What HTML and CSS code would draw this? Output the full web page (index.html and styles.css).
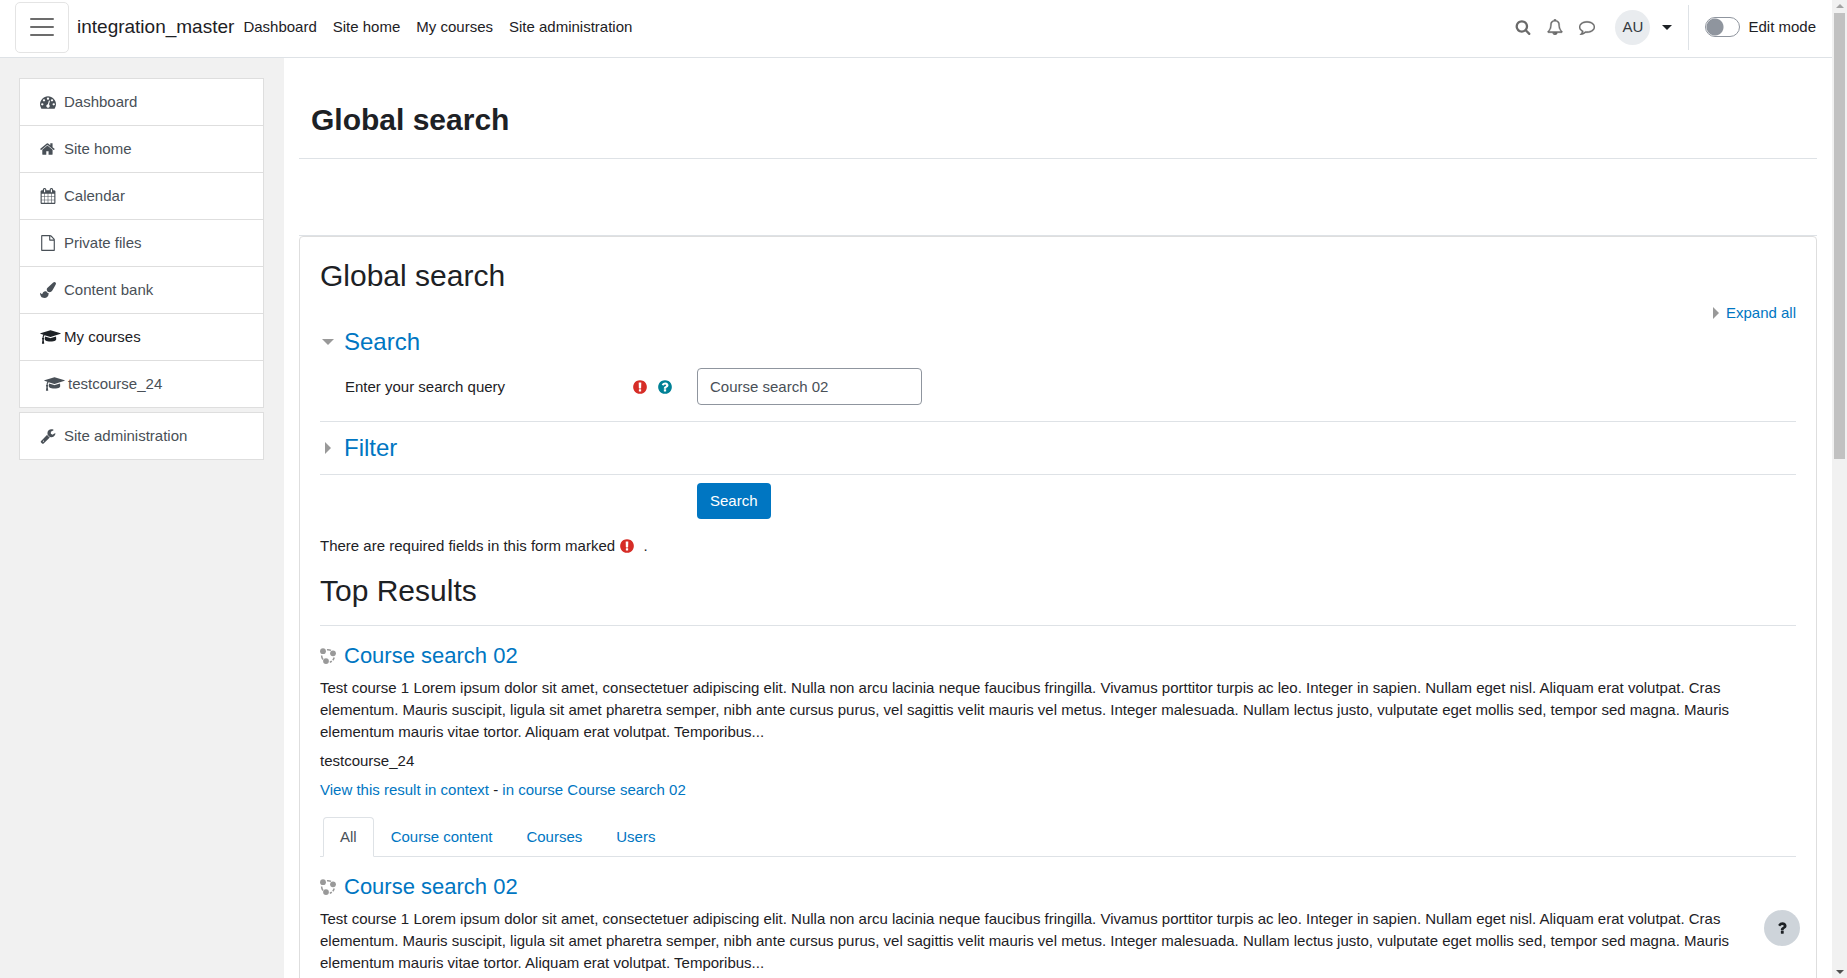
FILE: index.html
```html
<!DOCTYPE html>
<html lang="en">
<head>
<meta charset="utf-8">
<title>Global search</title>
<link rel="stylesheet" href="styles.css">
</head>
<body>
<svg class="sprite" aria-hidden="true">
  <symbol id="i-tachometer" viewBox="0 0 1792 1792"><path d="M384 1152q0-53-37.500-90.500t-90.500-37.500-90.500 37.500-37.500 90.500 37.500 90.500 90.500 37.500 90.500-37.500 37.500-90.500zm192-448q0-53-37.500-90.500t-90.500-37.500-90.500 37.500-37.500 90.500 37.500 90.500 90.500 37.500 90.500-37.500 37.500-90.500zm428 481l101-382q6-26-7.500-48.500t-38.500-29.500-48 6.500-30 39.500l-101 382q-60 5-107 43.500t-63 98.500q-20 77 20 146t117 89 146-20 89-117q16-60-6-117t-72-91zm660-33q0-53-37.500-90.500t-90.500-37.500-90.500 37.500-37.500 90.500 37.500 90.500 90.500 37.500 90.500-37.500 37.500-90.500zm-640-640q0-53-37.500-90.500t-90.500-37.500-90.500 37.500-37.500 90.500 37.500 90.500 90.500 37.500 90.500-37.500 37.500-90.500zm448 192q0-53-37.500-90.500t-90.500-37.500-90.500 37.500-37.500 90.500 37.500 90.500 90.500 37.500 90.500-37.500 37.500-90.500zm320 448q0 261-141 483-19 29-54 29h-1402q-35 0-54-29-141-221-141-483 0-182 71-348t191-286 286-191 348-71 348 71 286 191 191 286 71 348z"/></symbol>
  <symbol id="i-home" viewBox="0 0 1792 1792"><path transform="translate(-64 0)" d="M1472 992v480q0 26-19 45t-45 19h-384v-384h-256v384h-384q-26 0-45-19t-19-45v-480q0-1 .5-3t.5-3l575-474 575 474q1 2 1 6zm223-69l-62 74q-8 9-21 11h-3q-13 0-21-7l-692-577-692 577q-12 8-24 7-13-2-21-11l-62-74q-8-10-7-23.500t11-21.500l719-599q32-26 76-26t76 26l244 204v-195q0-14 9-23t23-9h192q14 0 23 9t9 23v408l219 182q10 8 11 21.500t-7 23.500z"/></symbol>
  <symbol id="i-calendar" viewBox="0 0 1792 1792"><path d="M192 1664h288v-288h-288v288zm352 0h320v-288h-320v288zm-352-352h288v-320h-288v320zm352 0h320v-320h-320v320zm-352-384h288v-288h-288v288zm736 736h320v-288h-320v288zm-384-736h320v-288h-320v288zm768 736h288v-288h-288v288zm-384-352h320v-320h-320v320zm-352-864v-288q0-13-9.500-22.500t-22.500-9.500h-64q-13 0-22.500 9.500t-9.500 22.500v288q0 13 9.500 22.500t22.500 9.500h64q13 0 22.500-9.500t9.500-22.500zm736 864h288v-320h-288v320zm-384-384h320v-288h-320v288zm384 0h288v-288h-288v288zm32-480v-288q0-13-9.500-22.500t-22.500-9.500h-64q-13 0-22.500 9.500t-9.500 22.500v288q0 13 9.500 22.500t22.500 9.500h64q13 0 22.500-9.500t9.500-22.500zm384-64v1280q0 52-38 90t-90 38h-1408q-52 0-90-38t-38-90v-1280q0-52 38-90t90-38h128v-96q0-66 47-113t113-47h64q66 0 113 47t47 113v96h384v-96q0-66 47-113t113-47h64q66 0 113 47t47 113v96h128q52 0 90 38t38 90z"/></symbol>
  <symbol id="i-file" viewBox="0 0 1792 1792"><path d="M1596 380q28 28 48 76t20 88v1152q0 40-28 68t-68 28h-1344q-40 0-68-28t-28-68v-1600q0-40 28-68t68-28h896q40 0 88 20t76 48zm-444-244v376h376q-10-29-22-41l-313-313q-12-12-41-22zm384 1528v-1024h-416q-40 0-68-28t-28-68v-416h-768v1536h1280z"/></symbol>
  <symbol id="i-brush" viewBox="0 0 1792 1792"><path d="M1615 0q70 0 122.500 46.500t52.500 116.500q0 63-45 151-332 629-465 752-97 91-218 91-126 0-216.500-92.500t-90.500-219.500q0-128 92-212l638-579q59-54 130-54zm-909 1034q39 76 106.500 130t150.500 76l1 71q4 213-129.500 347t-348.500 134q-123 0-218-46.500t-152.500-127.500-86.500-183-29-220q7 5 41 30t62 44.500 59 36.500 46 17q41 0 55-37 25-66 57.500-112.500t69.500-76 88-47.500 103-25.500 125-10.500z"/></symbol>
  <symbol id="i-cap" viewBox="0 0 2304 1792"><path d="M1774 836l18 316q4 69-82 128t-235 93.500-323 34.500-323-34.500-235-93.500-82-128l18-316 574 181q22 7 48 7t48-7zm530-324q0 23-22 31l-1120 352q-4 1-10 1t-10-1l-652-206q-43 34-71 111.500t-34 178.500q63 36 63 109 0 69-58 107l58 433q2 14-8 25-9 11-24 11h-192q-15 0-24-11-10-11-8-25l58-433q-58-38-58-107 0-73 65-111 11-207 98-330l-333-104q-22-8-22-31t22-31l1120-352q4-1 10-1t10 1l1120 352q22 8 22 31z"/></symbol>
  <symbol id="i-wrench" viewBox="0 0 1792 1792"><path d="M448 1472q0-26-19-45t-45-19-45 19-19 45 19 45 45 19 45-19 19-45zm644-420l-682 682q-37 37-90 37-52 0-91-37l-106-108q-38-36-38-90 0-53 38-91l681-681q39 98 114.500 173.500t173.500 114.500zm634-435q0 39-23 106-47 134-164.500 217.500t-258.500 83.500q-185 0-316.500-131.500t-131.500-316.500 131.500-316.500 316.500-131.500q58 0 121.500 16.500t107.500 46.500q16 11 16 28t-16 28l-293 169v224l193 107q5-3 79-48.500t135.500-81 70.500-35.500q15 0 23.500 10t8.500 25z"/></symbol>
  <symbol id="i-search" viewBox="0 0 1792 1792"><path d="M1216 832q0-185-131.500-316.500t-316.500-131.500-316.500 131.500-131.500 316.500 131.500 316.500 316.500 131.500 316.500-131.500 131.500-316.500zm512 832q0 52-38 90t-90 38q-54 0-90-38l-343-342q-179 124-399 124-143 0-273.500-55.500t-225-150-150-225-55.500-273.500 55.500-273.500 150-225 225-150 273.500-55.500 273.500 55.500 225 150 150 225 55.500 273.500q0 220-124 399l343 343q37 37 37 90z"/></symbol>
  <symbol id="i-bell" viewBox="0 0 1792 1792"><path stroke="currentColor" stroke-width="50" d="M912 1696q0-16-16-16-59 0-101.500-42.500t-42.500-101.500q0-16-16-16t-16 16q0 73 51.500 124.500t124.500 51.500q16 0 16-16zm-666-288h1300q-266-300-266-832 0-51-24-105t-69-103-121.500-80.500-169.500-31.500-169.500 31.500-121.500 80.500-69 103-24 105q0 532-266 832zm1482 0q0 52-38 90t-90 38h-448q0 106-75 181t-181 75-181-75-75-181h-448q-52 0-90-38t-38-90q50-42 91-88t85-119.500 74.500-158.500 50-206 19.500-260q0-152 117-282.500t307-158.500q-8-19-8-39 0-40 28-68t68-28 68 28 28 68q0 20-8 39 190 28 307 158.500t117 282.500q0 139 19.500 260t50 206 74.500 158.500 85 119.500 91 88z"/></symbol>
  <symbol id="i-comment" viewBox="0 0 1792 1792"><path stroke="currentColor" stroke-width="50" d="M896 384q-204 0-381.500 69.500t-282 187.500-104.500 255q0 112 71.500 213.500t201.500 175.500l87 50-27 96q-24 91-70 172 152-63 275-171l43-38 57 6q69 8 130 8 204 0 381.500-69.500t282-187.500 104.500-255-104.500-255-282-187.500-381.500-69.500zm896 512q0 174-120 321.500t-326 233-450 85.500q-70 0-145-8-198 175-460 242-49 14-114 22h-5q-15 0-27-10.500t-16-27.500v-1q-3-4-.5-12t2-10 4.500-9.500l6-9 7-8.500 8-9q7-8 31-34.500t34.500-38 31-39.500 32.500-51 27-59 26-76q-157-89-247.500-220t-90.500-281q0-174 120-321.500t326-233 450-85.500 450 85.500 326 233 120 321.500z"/></symbol>
  <symbol id="i-required" viewBox="0 0 1792 1792"><path d="M896 128q209 0 385.500 103t279.500 279.500 103 385.500-103 385.500-279.500 279.500-385.500 103-385.500-103-279.500-279.500-103-385.500 103-385.500 279.500-279.500 385.500-103zm128 1247v-190q0-14-9-23.500t-22-9.500h-192q-13 0-23 10t-10 23v190q0 13 10 23t23 10h192q13 0 22-9.500t9-23.500zm-2-344l18-621q0-12-10-18-10-8-24-8h-220q-14 0-24 8-10 6-10 18l17 621q0 10 10 17.500t24 7.500h185q14 0 23.500-7.500t10.500-17.500z"/></symbol>
  <symbol id="i-help" viewBox="0 0 1792 1792"><path d="M1024 1376v-192q0-14-9-23t-23-9h-192q-14 0-23 9t-9 23v192q0 14 9 23t23 9h192q14 0 23-9t9-23zm256-672q0-88-55.500-163t-138.500-116-170-41q-243 0-371 213-15 24 8 42l132 100q7 6 19 6 16 0 25-12 53-68 86-92 34-24 86-24 48 0 85.500 26t37.500 59q0 38-20 61t-68 45q-63 28-115.500 86.500t-52.500 125.500v36q0 14 9 23t23 9h192q14 0 23-9t9-23q0-19 21.500-49.500t54.500-49.500q32-18 49-28.500t46-35 44.500-48 28-60.500 12.500-81zm384 192q0 209-103 385.500t-279.500 279.500-385.500 103-385.500-103-279.500-279.500-103-385.500 103-385.500 279.500-279.500 385.500-103 385.500 103 279.500 279.500 103 385.500z"/></symbol>
  <symbol id="i-question" viewBox="0 0 1792 1792"><path d="M1088 1256v240q0 16-12 28t-28 12h-240q-16 0-28-12t-12-28v-240q0-16 12-28t28-12h240q16 0 28 12t12 28zm316-600q0 54-15.500 101t-35 76.500-55 59.500-57.500 43.500-61 35.500q-41 23-68.500 65t-27.500 67q0 17-12 32.500t-28 15.500h-240q-15 0-25.500-18.500t-10.500-37.500v-45q0-83 65-156.500t143-108.500q59-27 84-56t25-76q0-42-46.500-74t-107.500-32q-65 0-108 29-35 25-107 115-13 16-31 16-12 0-25-8l-164-125q-13-10-15.500-25t5.500-28q160-266 464-266 80 0 161 31t146 83 106 127.500 41 158.500z"/></symbol>
  <symbol id="i-course" viewBox="0 0 16 16"><circle cx="3" cy="3.200" r="2.900"/><circle cx="13" cy="5.300" r="2.900"/><circle cx="6" cy="13.100" r="2.900"/><path fill="none" stroke="currentColor" stroke-width="1.500" d="M7 1.700A6.500 6.500 0 0 1 11 2.400M1.600 7.500A6.500 6.500 0 0 0 3 11.500M14.200 9.500A6.500 6.500 0 0 1 12.800 12.200M11.800 13.200A6.500 6.500 0 0 1 9.800 14.200"/></symbol>
</svg>

<div class="viewport">
<div class="page">
  <header class="navbar">
    <button class="drawer-toggle" aria-label="Side panel"><svg class="bars" viewBox="0 0 30 30"><path d="M4 7h22M4 15h22M4 23h22"/></svg></button>
    <a class="brand" href="#">integration_master</a>
    <nav class="primary-nav">
      <a href="#">Dashboard</a><a href="#">Site home</a><a href="#">My courses</a><a href="#">Site administration</a>
    </nav>
    <div class="tools">
      <button class="tool" aria-label="Search"><svg class="icon"><use href="#i-search"/></svg></button>
      <button class="tool" aria-label="Notifications"><svg class="icon"><use href="#i-bell"/></svg></button>
      <button class="tool" aria-label="Messages"><svg class="icon"><use href="#i-comment"/></svg></button>
    </div>
    <button class="user-menu" aria-label="User menu"><span class="avatar">AU</span><span class="caret"></span></button>
    <label class="edit-mode"><input class="switch" type="checkbox" role="switch">Edit mode</label>
  </header>

  <div class="columns">
    <aside class="drawer">
      <nav class="nav-list">
        <a href="#"><svg class="icon"><use href="#i-tachometer"/></svg>Dashboard</a>
        <a href="#"><svg class="icon"><use href="#i-home"/></svg>Site home</a>
        <a href="#"><svg class="icon"><use href="#i-calendar"/></svg>Calendar</a>
        <a href="#"><svg class="icon"><use href="#i-file"/></svg>Private files</a>
        <a href="#"><svg class="icon"><use href="#i-brush"/></svg>Content bank</a>
        <a class="current" href="#"><svg class="icon wide"><use href="#i-cap"/></svg>My courses</a>
        <a class="nested" href="#"><svg class="icon wide"><use href="#i-cap"/></svg>testcourse_24</a>
      </nav>
      <nav class="nav-list">
        <a href="#"><svg class="icon"><use href="#i-wrench"/></svg>Site administration</a>
      </nav>
    </aside>

    <main class="content">
      <div class="page-header"><h1>Global search</h1></div>
      <div class="card-rule"></div>
      <section class="card">
        <h2 class="card-title">Global search</h2>
        <form>
          <div class="expand-row"><a href="#"><span class="arrow right"></span>Expand all</a></div>
          <fieldset class="group first">
            <h3 class="group-title"><span class="marker"><span class="arrow down"></span></span><a href="#">Search</a></h3>
            <div class="field">
              <label for="query">Enter your search query</label>
              <span class="field-icons"><svg class="icon danger"><use href="#i-required"/></svg><svg class="icon info"><use href="#i-help"/></svg></span>
              <input id="query" type="text" value="Course search 02">
            </div>
          </fieldset>
          <fieldset class="group">
            <h3 class="group-title"><span class="marker"><span class="arrow right"></span></span><a href="#">Filter</a></h3>
          </fieldset>
          <div class="actions"><button class="primary" type="button">Search</button></div>
          <p class="required-note">There are required fields in this form marked <svg class="icon danger"><use href="#i-required"/></svg> .</p>
        </form>

        <h2 class="results-title">Top Results</h2>
        <article class="result top">
          <h3><svg class="icon"><use href="#i-course"/></svg><a href="#">Course search 02</a></h3>
          <p>Test course 1 Lorem ipsum dolor sit amet, consectetuer adipiscing elit. Nulla non arcu lacinia neque faucibus fringilla. Vivamus porttitor turpis ac leo. Integer in sapien. Nullam eget nisl. Aliquam erat volutpat. Cras elementum. Mauris suscipit, ligula sit amet pharetra semper, nibh ante cursus purus, vel sagittis velit mauris vel metus. Integer malesuada. Nullam lectus justo, vulputate eget mollis sed, tempor sed magna. Mauris elementum mauris vitae tortor. Aliquam erat volutpat. Temporibus...</p>
          <p>testcourse_24</p>
          <p><a href="#">View this result in context</a> - <a href="#">in course Course search 02</a></p>
        </article>
        <nav class="tabs">
          <a class="active" href="#">All</a><a href="#">Course content</a><a href="#">Courses</a><a href="#">Users</a>
        </nav>
        <article class="result">
          <h3><svg class="icon"><use href="#i-course"/></svg><a href="#">Course search 02</a></h3>
          <p>Test course 1 Lorem ipsum dolor sit amet, consectetuer adipiscing elit. Nulla non arcu lacinia neque faucibus fringilla. Vivamus porttitor turpis ac leo. Integer in sapien. Nullam eget nisl. Aliquam erat volutpat. Cras elementum. Mauris suscipit, ligula sit amet pharetra semper, nibh ante cursus purus, vel sagittis velit mauris vel metus. Integer malesuada. Nullam lectus justo, vulputate eget mollis sed, tempor sed magna. Mauris elementum mauris vitae tortor. Aliquam erat volutpat. Temporibus...</p>
        </article>
      </section>
    </main>
  </div>
  <button class="help-button" aria-label="Help"><svg class="icon"><use href="#i-question"/></svg></button>
</div>
<div class="scrollbar" aria-hidden="true"><span class="scroll-arrow up"></span><span class="thumb"></span><span class="scroll-arrow down"></span></div>
</div>
</body>
</html>
```

FILE: styles.css
```css
* { box-sizing: border-box; }

body {
  margin: 0;
  background: #fff;
  color: #1d2125;
  font: 15px/22px "Liberation Sans", Arial, sans-serif;
}

a { color: #0076c2; text-decoration: none; }
button { font: inherit; color: inherit; background: none; border: 0; padding: 0; }
h1, h2, h3, p { margin: 0; }

.sprite { display: none; }
.icon { width: 16px; height: 16px; flex: none; fill: currentColor; }
.icon.wide { width: 21px; }
.icon.danger { color: #d62d27; }
.icon.info { color: #008196; }

.viewport { display: flex; height: 100vh; overflow: hidden; }
.page { position: relative; flex: 1; min-width: 0; display: flex; flex-direction: column; overflow: hidden; }

/* top bar */
.navbar {
  display: flex;
  align-items: center;
  flex: none;
  height: 58px;
  padding: 0 16px 3px 15px;
  border-bottom: 1px solid #dee2e6;
}
.drawer-toggle {
  display: grid;
  place-items: center;
  width: 54px;
  height: 51px;
  border: 1px solid #e4e4e4;
  border-radius: 5px;
}
.bars { width: 30px; height: 30px; fill: none; stroke: #6c6c6c; stroke-width: 2; stroke-linecap: round; }
.brand { margin: 0 9px 0 8px; color: #1d2125; font-size: 19px; }
.primary-nav { display: flex; gap: 16px; }
.primary-nav a { color: #1d2125; }
.tools { display: flex; gap: 16px; margin-left: auto; color: #6a6a6a; }
.tool { display: flex; }
.user-menu { display: flex; align-items: center; gap: 12px; margin: 0 16px 0 20px; }
.avatar {
  display: grid;
  place-items: center;
  width: 35px;
  height: 35px;
  border-radius: 50%;
  background: #e9ecef;
  color: #343a40;
}
.caret { border: 5px solid transparent; border-top-color: #1d2125; border-bottom: 0; }
.edit-mode {
  display: flex;
  align-items: center;
  gap: 8px;
  height: 45px;
  padding-left: 16px;
  border-left: 1px solid #dee2e6;
}
.switch {
  appearance: none;
  width: 35px;
  height: 20px;
  margin: 0;
  border: 1px solid #8f959e;
  border-radius: 10px;
  background: radial-gradient(circle at 9px 9px, #8f959e 8px, transparent 9px);
}

/* side drawer */
.columns { display: flex; flex: 1; min-height: 0; }
.drawer {
  display: flex;
  flex-direction: column;
  gap: 4px;
  flex: none;
  width: 284px;
  padding: 20px 20px 0 19px;
  background: #f1f1f1;
}
.nav-list { border: 1px solid #dedede; background: #fff; }
.nav-list a {
  display: flex;
  align-items: center;
  gap: 8px;
  height: 46px;
  padding-left: 20px;
  color: #495057;
}
.nav-list a + a { height: 47px; border-top: 1px solid #dedede; }
.nav-list .icon.wide { margin-right: -5px; }
.nav-list a.current { color: #1d2125; }
.nav-list a.nested { padding-left: 24px; }

/* main column */
.content { flex: 1; min-width: 0; padding: 0 15px; }
.page-header { padding: 44px 12px 20px; border-bottom: 1px solid #dee2e6; }
h1 { font-size: 30px; line-height: 36px; }
.card-rule { margin-top: 76px; border-top: 1px solid #dee2e6; }
.card { padding: 21px 20px 20px; border: 1px solid #dedede; border-radius: 4px; min-height: 100%; }
h2 { font-weight: 400; font-size: 30px; line-height: 36px; }
h3 { font-weight: 400; }
.expand-row { display: flex; justify-content: flex-end; padding-top: 8px; }
.expand-row a { display: flex; align-items: center; gap: 7px; }
.arrow { width: 0; height: 0; border: 6px solid transparent; }
.arrow.right { border-left-color: #999; border-right: 0; }
.arrow.down { border-top-color: #999; border-bottom: 0; }
.group { margin: 0; padding: 12px 0; border: 0; border-bottom: 1px solid #dee2e6; }
.group.first { padding: 4px 0 16px; }
.group-title { display: flex; align-items: center; font-size: 24px; line-height: 28px; }
.marker { display: flex; justify-content: center; width: 16px; margin-right: 8px; }
.field { display: flex; align-items: center; margin-top: 12px; padding-left: 25px; }
.field label { width: 287px; }
.field-icons { display: flex; gap: 9px; width: 65px; }
.field input {
  width: 225px;
  height: 37px;
  padding: 0 12px;
  border: 1px solid #8f959e;
  border-radius: 4px;
  color: #495057;
  font: inherit;
}
.actions { padding: 8px 0 0 377px; }
.primary { height: 36px; padding: 0 13px; border-radius: 4px; background: #0076c2; color: #fff; }
.required-note { margin-top: 16px; }
.required-note .icon { vertical-align: -3px; margin-right: 4px; }
.results-title { margin-top: 16px; }

/* results */
.result.top { margin-top: 16px; border-top: 1px solid #dee2e6; }
.result { padding-top: 16px; }
.result h3 { display: flex; align-items: center; gap: 8px; font-size: 22px; line-height: 28px; }
.result h3 .icon { color: #999; }
.result p { margin-top: 7px; }
.tabs { display: flex; margin-top: 16px; padding-left: 3px; border-bottom: 1px solid #dee2e6; }
.tabs a { padding: 8px 16px; border: 1px solid transparent; border-radius: 4px 4px 0 0; margin-bottom: -1px; }
.tabs a.active { border-color: #dee2e6 #dee2e6 #fff; background: #fff; color: #495057; }

.help-button {
  position: absolute;
  right: 32px;
  bottom: 32px;
  display: grid;
  place-items: center;
  width: 36px;
  height: 36px;
  border-radius: 50%;
  background: #ced4da;
}

/* scroll rail */
.scrollbar {
  display: flex;
  flex-direction: column;
  align-items: center;
  flex: none;
  width: 15px;
  padding: 4px 0;
  background: #f1f1f1;
}
.scroll-arrow { border: 4px solid transparent; }
.scroll-arrow.up { border-top: 0; border-bottom-color: #a3a3a3; }
.scroll-arrow.down { margin-top: auto; border-bottom: 0; border-top-color: #505050; }
.thumb { width: 11px; height: 46%; margin-top: 5px; background: #c1c1c1; }
```
